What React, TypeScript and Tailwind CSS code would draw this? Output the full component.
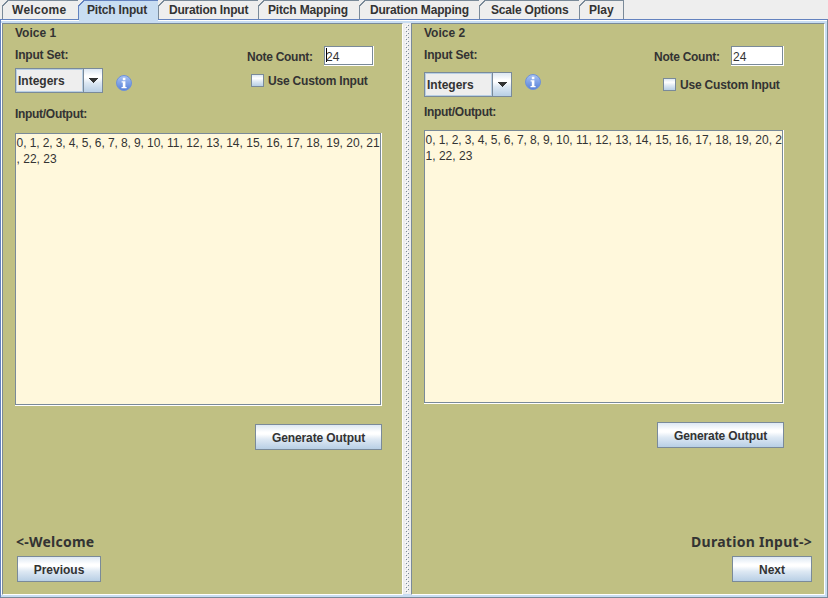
import React from "react";

const tabs = [
  { label: "Welcome", width: "w-[76px]", pad: "pl-[9px] tracking-[0.28px]" },
  { label: "Pitch Input", width: "w-[80px]", pad: "pl-[8px] tracking-[-0.18px]", active: true },
  { label: "Duration Input", width: "w-[100px]", pad: "pl-[10px] tracking-[-0.2px]" },
  { label: "Pitch Mapping", width: "w-[101px]", pad: "pl-[9px] tracking-[-0.16px]" },
  { label: "Duration Mapping", width: "w-[120px]", pad: "pl-[10px] tracking-[-0.2px]" },
  { label: "Scale Options", width: "w-[100px]", pad: "pl-[11px] tracking-[-0.2px]" },
  { label: "Play", width: "w-[45px]", pad: "pl-[9px] border-r" },
];

function TabBar() {
  return (
    <div className="flex h-[19px] bg-[#eeeeee] pl-[2px]">
      {tabs.map((t) => (
        <div
          key={t.label}
          className={`relative shrink-0 whitespace-pre border-l border-t pt-[2px] ${t.width} ${t.pad} ${
            t.active
              ? "z-10 h-[20px] border-l-[#6382bf] border-t-[#6382bf] bg-[#c8ddf2]"
              : "h-[19px] border-[#7a8a99] bg-[#eeeeee]"
          }`}
        >
          {t.active && <div className="absolute left-0 top-[18px] h-[4px] w-full bg-[#c8ddf2]" />}
          <svg className="absolute -left-px -top-px" width="7" height="7" shapeRendering="crispEdges">
            <path d="M0 0H6L0 6Z" fill="#eeeeee" />
            <path d="M0 6.5L6.5 0" stroke={t.active ? "#6382bf" : "#7a8a99"} fill="none" />
          </svg>
          {t.label}
        </div>
      ))}
    </div>
  );
}

function Button({ label, className }: { label: string; className: string }) {
  return (
    <button
      className={`flex h-[26px] shrink-0 items-center justify-center whitespace-nowrap border border-[#7a8a99] bg-[linear-gradient(to_bottom,#dde8f3_0%,#ffffff_30%,#ffffff_38%,#dde8f3_60%,#b8cfe5_100%)] pt-[2px] font-bold ${className}`}
    >
      {label}
    </button>
  );
}

function Combo() {
  return (
    <div className="flex h-[25px] w-[88px] border border-[#7a8a99] bg-[#eeeeee]">
      <div className="w-[67px] border border-[#b8cfe5] pl-px pt-[4px]">Integers</div>
      <div className="flex w-[19px] items-center border-l border-[#7a8a99] bg-[linear-gradient(to_bottom,#dde8f3_0%,#ffffff_30%,#ffffff_38%,#dde8f3_60%,#b8cfe5_100%)] pl-[4px]">
        <svg width="10" height="5" shapeRendering="crispEdges">
          <path d="M0 0H10L5 5Z" fill="#333333" />
        </svg>
      </div>
    </div>
  );
}

function InfoIcon({ id }: { id: string }) {
  return (
    <svg width="16" height="16" viewBox="0 0 16 16">
      <defs>
        <linearGradient id={id} x1="0" y1="0" x2="0" y2="1">
          <stop offset="0" stopColor="#a9c4f4" />
          <stop offset="1" stopColor="#5680d8" />
        </linearGradient>
      </defs>
      <circle cx="8" cy="8" r="7.5" fill={`url(#${id})`} stroke="#6f92d8" />
      <path d="M6.8 2.8h2.6v2.4H6.8zM5.6 6.3h3.8v5.6h1.2v1.3H5.5v-1.3h1.3V7.6H5.6z" fill="#fff" />
    </svg>
  );
}

function Checkbox({ className }: { className: string }) {
  return (
    <div className={`flex items-start ${className}`}>
      <div className="mr-[4px] h-[13px] w-[13px] border border-[#7a8a99] bg-[linear-gradient(to_bottom,#dde8f3_0%,#ffffff_30%,#dde8f3_60%,#b8cfe5_100%)]" />
      <span className="whitespace-nowrap tracking-[-0.19px]">Use Custom Input</span>
    </div>
  );
}

function Field({ className, caret }: { className: string; caret?: boolean }) {
  return (
    <div className={`border-b border-r border-white ${className}`}>
      <div className="flex h-full border border-[#7a8a99] bg-white pt-[3px] font-normal">
        <div className={`-mr-px -mt-[2px] ml-px h-[14px] w-px ${caret ? "bg-black" : ""}`} />
        <span>24</span>
      </div>
    </div>
  );
}

function Output({ className, tail, rest }: { className: string; tail: string; rest: string }) {
  return (
    <div className={`shrink-0 border-b border-r border-white ${className}`}>
      <div className="h-full whitespace-pre border border-[#7a8a99] bg-[#fff8dc] pl-[0.6px] pt-px font-normal leading-[16px]">
        <div>
          <span className="tracking-[-0.1px]">0, 1, 2, 3, 4, 5, 6, 7, 8, 9, </span>
          <span>10, 11, 12, 13, 14, 15, 16, 17, 18, 19, 20, {tail}</span>
        </div>
        <div>{rest}</div>
      </div>
    </div>
  );
}

function Divider() {
  return (
    <svg width="8" height="571" className="shrink-0 bg-[#eeeeee]" shapeRendering="crispEdges">
      <defs>
        <pattern id="bumps" x="2" y="0" width="4" height="4" patternUnits="userSpaceOnUse">
          <rect x="0" y="3" width="1" height="1" fill="#ffffff" />
          <rect x="1" y="0" width="1" height="1" fill="#7a8a99" />
          <rect x="2" y="1" width="1" height="1" fill="#ffffff" />
          <rect x="3" y="2" width="1" height="1" fill="#7a8a99" />
        </pattern>
      </defs>
      <rect x="2" y="1" width="4" height="569" fill="url(#bumps)" />
    </svg>
  );
}

const panel =
  "flex h-[572px] shrink-0 flex-col border-l border-t border-b border-r border-l-[#7a8a99] border-t-[#7a8a99] border-b-white border-r-white bg-[#c0c083]";
const nav = "font-['Noto_Sans',sans-serif] text-[14px] leading-[18px] whitespace-nowrap";

export default function App() {
  return (
    <div className="h-[598px] w-[828px] overflow-hidden bg-[#eeeeee] font-['Liberation_Sans',Arial,sans-serif] text-[12px] font-bold leading-[14px] text-[#333333]">
      <TabBar />
      <div className="flex h-[579px] w-[828px] flex-col border border-b-[#7a8a99] border-l-[#6382bf] border-r-[#7a8a99] border-t-[#6382bf] bg-[#c8ddf2]">
        <div className="h-[3px] shrink-0 border-t border-white" />
        <div className="flex h-[572px] border-l border-white">
          <section className={`w-[401px] pl-[12px] ${panel}`}>
            <div className="flex h-[109px] shrink-0">
              <div className="w-[232px] pt-[2px]">
                <div>Voice 1</div>
                <div className="mt-[8px] tracking-[-0.2px]">Input Set:</div>
                <div className="mt-[6px] flex items-start gap-[13px]">
                  <Combo />
                  <div className="pt-[7px]"><InfoIcon id="info1" /></div>
                </div>
                <div className="mt-[14px] tracking-[-0.3px]">Input/Output:</div>
              </div>
              <div className="pt-[22px]">
                <div className="flex">
                  <span className="w-[77px] pt-[4px] tracking-[-0.27px]">Note Count:</span>
                  <Field className="h-[20px] w-[50px]" caret />
                </div>
                <Checkbox className="ml-[4px] mt-[8px]" />
              </div>
            </div>
            <Output className="h-[273px] w-[367px]" tail="21" rest=", 22, 23" />
            <Button label="Generate Output" className="ml-[240px] mt-[18px] w-[127px] tracking-[-0.1px]" />
            <div className={`ml-px mt-[83px] tracking-[0.24px] ${nav}`}>{"<-Welcome"}</div>
            <Button label="Previous" className="ml-[2px] mt-[5px] w-[84px]" />
          </section>
          <Divider />
          <section className={`w-[414px] pl-[12px] ${panel}`}>
            <div className="flex h-[106px] shrink-0">
              <div className="w-[230px] pt-[2px]">
                <div>Voice 2</div>
                <div className="mt-[8px] tracking-[-0.2px]">Input Set:</div>
                <div className="mt-[10px] flex items-start gap-[13px]">
                  <Combo />
                  <div className="pt-[2px]"><InfoIcon id="info2" /></div>
                </div>
                <div className="mt-[8px] tracking-[-0.3px]">Input/Output:</div>
              </div>
              <div className="pt-[22px]">
                <div className="flex">
                  <span className="w-[77px] pt-[4px] tracking-[-0.27px]">Note Count:</span>
                  <Field className="h-[20px] w-[53px]" />
                </div>
                <Checkbox className="ml-[9px] mt-[12px]" />
              </div>
            </div>
            <Output className="h-[274px] w-[360px]" tail="2" rest="1, 22, 23" />
            <Button label="Generate Output" className="ml-[233px] mt-[18px] w-[127px] tracking-[-0.1px]" />
            <div className={`ml-[267px] mt-[85px] tracking-[0.28px] ${nav}`}>{"Duration Input->"}</div>
            <Button label="Next" className="ml-[308px] mt-[5px] w-[80px]" />
          </section>
        </div>
      </div>
    </div>
  );
}
